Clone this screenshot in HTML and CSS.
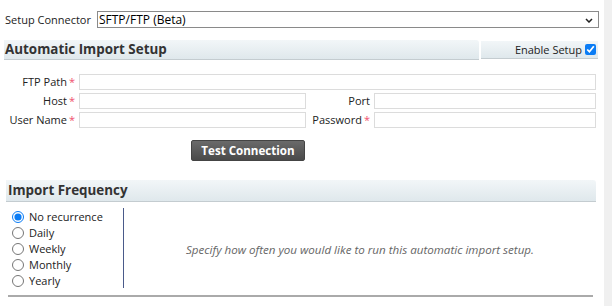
FILE: index.html
```html
<!doctype html>
<html lang="en">
<head>
  <meta charset="utf-8">
  <title>Automatic Import Setup</title>
  <link rel="stylesheet" href="styles.css">
</head>
<body>
  <div class="page">
    <main class="content">
      <div class="connector-row">
        <label for="connector">Setup Connector</label>
        <div class="select-wrap">
          <select id="connector">
            <option>SFTP/FTP (Beta)</option>
          </select>
          <svg class="chevron" width="8" height="5" viewBox="0 0 8 5"><path d="M1 1l3 3 3-3" fill="none" stroke="#222" stroke-width="1.5"/></svg>
        </div>
      </div>

      <div class="head-row">
        <h2 class="section-head">Automatic Import Setup</h2>
        <label class="enable-box">Enable Setup <input type="checkbox" checked></label>
      </div>

      <div class="ftp-form">
        <label class="lbl">FTP Path<span class="req">*</span></label>
        <input type="text" class="wide">
        <label class="lbl">Host<span class="req">*</span></label>
        <input type="text">
        <label class="lbl">Port</label>
        <input type="text">
        <label class="lbl">User Name<span class="req">*</span></label>
        <input type="text">
        <label class="lbl">Password<span class="req">*</span></label>
        <input type="password">
      </div>

      <div class="btn-row">
        <button class="test-btn">Test Connection</button>
      </div>

      <h2 class="section-head freq-head">Import Frequency</h2>
      <div class="freq">
        <ul class="freq-options">
          <li><label><input type="radio" name="freq" checked> No recurrence</label></li>
          <li><label><input type="radio" name="freq"> Daily</label></li>
          <li><label><input type="radio" name="freq"> Weekly</label></li>
          <li><label><input type="radio" name="freq"> Monthly</label></li>
          <li><label><input type="radio" name="freq"> Yearly</label></li>
        </ul>
        <p class="freq-hint">Specify how often you would like to run this automatic import setup.</p>
      </div>
      <div class="freq-rule"></div>
    </main>
    <div class="gutter"></div>
  </div>
</body>
</html>
```

FILE: styles.css
```css
:root {
  --text:      #222;
  --muted:     #666;
  --req:       #f0506e;
  --field-bd:  #dcdcdc;
  --head-top:  #f2f6f8;
  --head-bot:  #dfe8ec;
}
*, *::before, *::after { box-sizing: border-box; }
body {
  margin: 0;
  font-family: "Open Sans", sans-serif;
  font-size: 11px;
  color: var(--text);
  background: #fff;
}
.page { display: flex; height: 306px; overflow: hidden; }
.content { flex: 1; padding: 11px 0 0 4px; }
.gutter { width: 8px; background: #f0f0f0; }

/* ── connector ─────────────────────────────── */
.connector-row { display: flex; align-items: center; gap: 6px; padding-left: 1px; padding-right: 5px; }
.select-wrap { flex: 1; position: relative; display: flex; }
.select-wrap select {
  flex: 1;
  height: 17px;
  appearance: none;
  font: 12px "Open Sans", sans-serif;
  line-height: 15px;
  border: 1px solid #8a8a8a;
  border-radius: 0;
  padding: 0 0 0 1px;
  background: #fff;
  color: #000;
}
.chevron { position: absolute; right: 6px; top: 7px; }

/* ── section heads ─────────────────────────── */
.head-row { display: flex; gap: 2px; margin-top: 12px; padding-right: 6px; }
.section-head {
  margin: 0;
  flex: 1;
  height: 20px;
  line-height: 19px;
  padding-left: 1px;
  font-size: 13.4px;
  font-weight: 700;
  color: #333;
  background: linear-gradient(var(--head-top), var(--head-bot));
  border-bottom: 1px solid #c4ccd0;
  border-top-right-radius: 3px;
}
.enable-box {
  width: 117px;
  height: 18px;
  margin-top: 1px;
  display: flex;
  align-items: center;
  justify-content: flex-end;
  gap: 3px;
  padding-right: 2px;
  font-size: 11px;
  background: linear-gradient(var(--head-top), var(--head-bot));
  border-bottom: 1px solid #c4ccd0;
}
.enable-box input { margin: 0; width: 11px; height: 11px; accent-color: #0a7cf5; }

/* ── ftp form ──────────────────────────────── */
.ftp-form {
  display: grid;
  grid-template-columns: 71px 227px 60px 222px;
  column-gap: 4px;
  row-gap: 3px;
  margin-top: 14px;
}
.lbl { text-align: right; line-height: 16px; white-space: nowrap; }
.req { color: var(--req); margin-left: 2px; }
.ftp-form input {
  height: 16px;
  border: 1px solid var(--field-bd);
  padding: 0 2px;
  font: inherit;
}
.ftp-form .wide { grid-column: 2 / 5; }

.btn-row { padding-left: 187px; margin-top: 12px; }
.test-btn {
  width: 114px;
  height: 21px;
  border: 1px solid #444;
  border-radius: 2px;
  background: linear-gradient(#6a6a6a, #4a4a4a);
  color: #fff;
  font: 700 11.6px "Open Sans", sans-serif;
  padding: 0;
}

/* ── frequency ─────────────────────────────── */
.freq-head { margin: 19px 8px 0 2px; height: 22px; line-height: 20px; padding-left: 2px; }
.freq { display: flex; margin-top: 6px; }
.freq-options {
  list-style: none;
  margin: 0;
  padding: 1px 0 0 8px;
  width: 120px;
  border-right: 1px solid #4a5a8a;
  height: 80px;
}
.freq-options li { height: 16px; line-height: 16px; }
.freq-options label { display: flex; align-items: center; gap: 5px; }
.freq-options input { margin: 0; width: 12px; height: 12px; accent-color: #0a7cf5; }
.freq-hint {
  flex: 1;
  margin: 0;
  align-self: center;
  text-align: center;
  font-size: 11.6px;
  font-style: italic;
  color: var(--muted);
  padding-top: 3px;
  padding-right: 8px;
}
.freq-rule { margin: 7px 11px 0 4px; border-top: 2px solid #aaa; }
```
